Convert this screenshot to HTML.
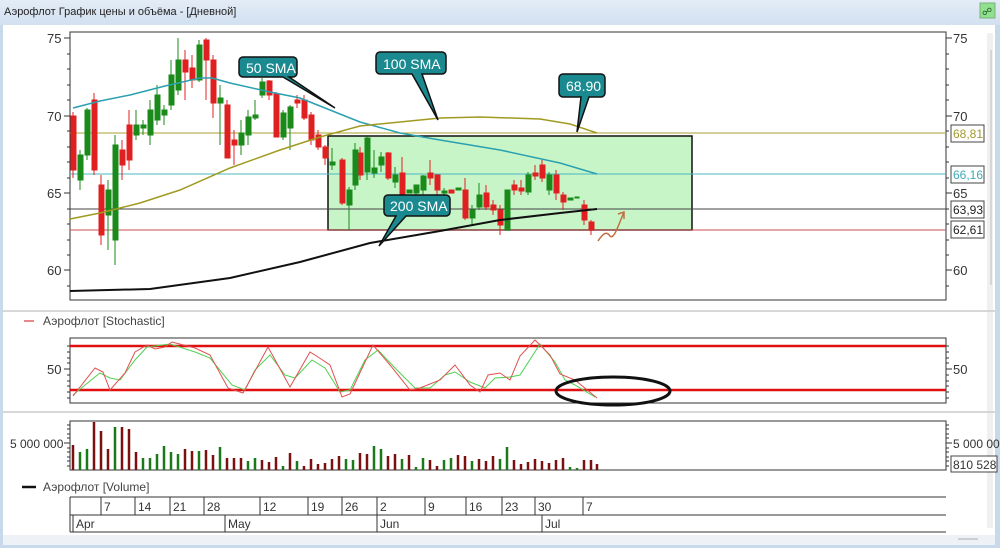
<!DOCTYPE html>
<html><head><meta charset="utf-8"><style>
html,body{margin:0;padding:0;width:1000px;height:548px;overflow:hidden;background:#c9d9ec;}
svg{display:block;font-family:"Liberation Sans","DejaVu Sans",sans-serif;}
</style></head><body>
<svg width="1000" height="548" viewBox="0 0 1000 548" xmlns="http://www.w3.org/2000/svg">
<defs><linearGradient id="tb" x1="0" y1="0" x2="0" y2="1"><stop offset="0" stop-color="#e4edf7"/><stop offset="1" stop-color="#d2e0f0"/></linearGradient></defs>
<rect x="0" y="0" width="1000" height="548" fill="#c9d9ec"/>
<rect x="0" y="0" width="1000" height="25" fill="url(#tb)"/>
<text x="4" y="15" font-size="11" fill="#222">Аэрофлот График цены и объёма - [Дневной]</text>
<rect x="980" y="3" width="15" height="15" fill="#8fe08f" stroke="#7ab07a"/>
<text x="982" y="15" font-size="10" fill="#225522">&#x260D;</text>
<rect x="3" y="25" width="992" height="510" fill="#fff"/>
<rect x="3" y="535" width="992" height="10" fill="#eef1f5"/>
<line x1="958" y1="539" x2="978" y2="539" stroke="#aaa"/>
<rect x="987" y="33" width="6" height="495" fill="#f0f0f0"/>
<line x1="991" y1="50" x2="991" y2="285" stroke="#bbb"/>
<!-- separators -->
<line x1="3" y1="311" x2="995" y2="311" stroke="#ccc" stroke-width="1.5"/>
<line x1="3" y1="412" x2="995" y2="412" stroke="#ccc" stroke-width="1.5"/>

<!-- MAIN PLOT -->
<rect x="70" y="32" width="876" height="268" fill="#fff" stroke="#333" stroke-width="1"/>
<g stroke="#333" font-size="13" fill="#333">
<line x1="64" y1="38" x2="70" y2="38"/><line x1="64" y1="116" x2="70" y2="116"/><line x1="64" y1="193" x2="70" y2="193"/><line x1="64" y1="270" x2="70" y2="270"/>
<line x1="946" y1="38" x2="952" y2="38"/><line x1="946" y1="116" x2="952" y2="116"/><line x1="946" y1="193" x2="952" y2="193"/><line x1="946" y1="270" x2="952" y2="270"/>
</g>
<g stroke="#333"><path d="M67 54h3M67 69h3M67 85h3M67 100h3M67 131h3M67 147h3M67 162h3M67 178h3M67 209h3M67 224h3M67 240h3M67 255h3M67 286h3M946 54h3M946 69h3M946 85h3M946 100h3M946 131h3M946 147h3M946 162h3M946 178h3M946 209h3M946 224h3M946 240h3M946 255h3M946 286h3"/></g>
<g font-size="13" fill="#333"><text x="47" y="43">75</text><text x="47" y="121">70</text><text x="47" y="198">65</text><text x="47" y="275">60</text>
<text x="953" y="43">75</text><text x="953" y="121">70</text><text x="953" y="198">65</text><text x="953" y="275">60</text></g>

<!-- green box -->
<rect x="328" y="136" width="364" height="94" fill="#c8f5c8" stroke="#111" stroke-width="1.5"/>
<!-- horizontal lines -->
<line x1="70" y1="133" x2="946" y2="133" stroke="#a8a030"/>
<line x1="70" y1="174" x2="946" y2="174" stroke="#4ab8c0"/>
<line x1="70" y1="209" x2="946" y2="209" stroke="#444"/>
<line x1="70" y1="230" x2="946" y2="230" stroke="#c85050"/>
<g font-size="12"><rect x="951" y="125" width="33" height="17" fill="#fff" stroke="#444"/><text x="953" y="138" fill="#a09a30">68,81</text>
<rect x="951" y="166" width="33" height="17" fill="#fff" stroke="#444"/><text x="953" y="179" fill="#40a8b8">66,16</text>
<rect x="951" y="201" width="33" height="17" fill="#fff" stroke="#444"/><text x="953" y="214" fill="#222">63,93</text>
<rect x="951" y="221" width="33" height="17" fill="#fff" stroke="#444"/><text x="953" y="234" fill="#222">62,61</text></g>

<!-- candles -->
<g stroke-width="1">
<g stroke="#e02020" fill="#e02020">
<line x1="73" y1="112" x2="73" y2="178"/><rect x="71" y="116" width="5" height="54"/>
<line x1="94" y1="93" x2="94" y2="175"/><rect x="92" y="100" width="5" height="70"/>
<line x1="101" y1="175" x2="101" y2="245"/><rect x="99" y="185" width="5" height="50"/>
<line x1="122" y1="140" x2="122" y2="180"/><rect x="120" y="150" width="5" height="15"/>
<line x1="129" y1="110" x2="129" y2="170"/><rect x="127" y="125" width="5" height="35"/>
<line x1="185" y1="50" x2="185" y2="100"/><rect x="183" y="60" width="5" height="12"/>
<line x1="192" y1="55" x2="192" y2="88"/><rect x="190" y="68" width="5" height="12"/>
<line x1="206" y1="38" x2="206" y2="100"/><rect x="204" y="40" width="5" height="20"/>
<line x1="213" y1="55" x2="213" y2="118"/><rect x="211" y="60" width="5" height="43"/>
<line x1="227" y1="100" x2="227" y2="158"/><rect x="225" y="105" width="5" height="53"/>
<line x1="234" y1="130" x2="234" y2="165"/><rect x="232" y="140" width="5" height="5"/>
<line x1="269" y1="80" x2="269" y2="100"/><rect x="267" y="81" width="5" height="14"/>
<line x1="276" y1="92" x2="276" y2="137"/><rect x="274" y="94" width="5" height="43"/>
<line x1="297" y1="95" x2="297" y2="108"/><rect x="295" y="100" width="5" height="3"/>
<line x1="304" y1="95" x2="304" y2="120"/><rect x="302" y="100" width="5" height="18"/>
<line x1="311" y1="112" x2="311" y2="145"/><rect x="309" y="115" width="5" height="25"/>
<line x1="318" y1="130" x2="318" y2="150"/><rect x="316" y="135" width="5" height="12"/>
<line x1="325" y1="145" x2="325" y2="165"/><rect x="323" y="147" width="5" height="11"/>
<line x1="342" y1="158" x2="342" y2="205"/><rect x="340" y="160" width="5" height="43"/>
<line x1="360" y1="147" x2="360" y2="180"/><rect x="358" y="153" width="5" height="22"/>
<line x1="388" y1="152" x2="388" y2="180"/><rect x="386" y="153" width="5" height="25"/>
<line x1="402" y1="157" x2="402" y2="196"/><rect x="400" y="173" width="5" height="22"/>
<line x1="430" y1="160" x2="430" y2="185"/><rect x="428" y="173" width="5" height="5"/>
<line x1="437" y1="175" x2="437" y2="197"/><rect x="435" y="175" width="5" height="15"/>
<rect x="449" y="190" width="5" height="3"/>
<line x1="465" y1="178" x2="465" y2="220"/><rect x="463" y="190" width="5" height="28"/>
<line x1="486" y1="185" x2="486" y2="210"/><rect x="484" y="193" width="5" height="14"/>
<line x1="493" y1="200" x2="493" y2="215"/><rect x="491" y="205" width="5" height="5"/>
<line x1="500" y1="205" x2="500" y2="235"/><rect x="498" y="210" width="5" height="15"/>
<line x1="514" y1="180" x2="514" y2="195"/><rect x="512" y="185" width="5" height="5"/>
<line x1="521" y1="180" x2="521" y2="195"/><rect x="519" y="188" width="5" height="3"/>
<line x1="535" y1="165" x2="535" y2="180"/><rect x="533" y="173" width="5" height="3"/>
<line x1="542" y1="160" x2="542" y2="182"/><rect x="540" y="165" width="5" height="13"/>
<line x1="556" y1="170" x2="556" y2="200"/><rect x="554" y="175" width="5" height="18"/>
<line x1="563" y1="192" x2="563" y2="210"/><rect x="561" y="195" width="5" height="7"/>
<line x1="584" y1="200" x2="584" y2="225"/><rect x="582" y="205" width="5" height="15"/>
<line x1="591" y1="220" x2="591" y2="235"/><rect x="589" y="222" width="5" height="8"/>
</g>
<g stroke="#1a8a1a" fill="#1a8a1a">
<line x1="80" y1="150" x2="80" y2="190"/><rect x="78" y="155" width="5" height="25"/>
<line x1="87" y1="108" x2="87" y2="160"/><rect x="85" y="110" width="5" height="45"/>
<line x1="108" y1="180" x2="108" y2="250"/><rect x="106" y="190" width="5" height="25"/>
<line x1="115" y1="135" x2="115" y2="265"/><rect x="113" y="145" width="5" height="95"/>
<line x1="136" y1="110" x2="136" y2="140"/><rect x="134" y="125" width="5" height="10"/>
<line x1="143" y1="120" x2="143" y2="135"/><rect x="141" y="125" width="5" height="3"/>
<line x1="150" y1="100" x2="150" y2="145"/><rect x="148" y="110" width="5" height="25"/>
<line x1="157" y1="85" x2="157" y2="125"/><rect x="155" y="95" width="5" height="25"/>
<line x1="164" y1="105" x2="164" y2="125"/><rect x="162" y="110" width="5" height="5"/>
<line x1="171" y1="60" x2="171" y2="110"/><rect x="169" y="75" width="5" height="30"/>
<line x1="178" y1="38" x2="178" y2="95"/><rect x="176" y="60" width="5" height="30"/>
<line x1="199" y1="40" x2="199" y2="82"/><rect x="197" y="45" width="5" height="35"/>
<line x1="220" y1="85" x2="220" y2="145"/><rect x="218" y="98" width="5" height="5"/>
<line x1="241" y1="120" x2="241" y2="155"/><rect x="239" y="133" width="5" height="12"/>
<line x1="248" y1="110" x2="248" y2="145"/><rect x="246" y="117" width="5" height="18"/>
<line x1="255" y1="100" x2="255" y2="120"/><rect x="253" y="115" width="5" height="3"/>
<line x1="262" y1="78" x2="262" y2="98"/><rect x="260" y="82" width="5" height="13"/>
<line x1="283" y1="110" x2="283" y2="140"/><rect x="281" y="113" width="5" height="24"/>
<line x1="290" y1="105" x2="290" y2="150"/><rect x="288" y="107" width="5" height="21"/>
<line x1="332" y1="148" x2="332" y2="170"/><rect x="330" y="162" width="5" height="3"/>
<line x1="349" y1="187" x2="349" y2="230"/><rect x="347" y="190" width="5" height="15"/>
<line x1="355" y1="143" x2="355" y2="190"/><rect x="353" y="150" width="5" height="35"/>
<line x1="367" y1="137" x2="367" y2="180"/><rect x="365" y="138" width="5" height="34"/>
<line x1="374" y1="150" x2="374" y2="178"/><rect x="372" y="168" width="5" height="5"/>
<line x1="381" y1="152" x2="381" y2="172"/><rect x="379" y="157" width="5" height="8"/>
<line x1="395" y1="167" x2="395" y2="188"/><rect x="393" y="175" width="5" height="7"/>
<rect x="407" y="190" width="5" height="3"/>
<line x1="416" y1="185" x2="416" y2="195"/><rect x="414" y="185" width="5" height="8"/>
<line x1="423" y1="175" x2="423" y2="195"/><rect x="421" y="176" width="5" height="14"/>
<line x1="444" y1="188" x2="444" y2="196"/><rect x="442" y="191" width="5" height="2"/>
<rect x="456" y="188" width="5" height="2"/>
<line x1="472" y1="205" x2="472" y2="225"/><rect x="470" y="210" width="5" height="8"/>
<line x1="479" y1="183" x2="479" y2="210"/><rect x="477" y="195" width="5" height="12"/>
<rect x="505" y="190" width="5" height="40"/>
<line x1="528" y1="172" x2="528" y2="195"/><rect x="526" y="175" width="5" height="17"/>
<line x1="549" y1="172" x2="549" y2="195"/><rect x="547" y="175" width="5" height="15"/>
<rect x="568" y="198" width="5" height="2"/>
<rect x="575" y="197" width="4" height="1"/>
</g></g>

<!-- SMAs -->
<polyline fill="none" stroke="#2aa0b0" stroke-width="1.5" points="73,108 100,101 130,95 165,86 200,78 212,78 230,83 270,92 300,98 330,110 360,122 400,133 440,140 500,150 560,163 597,174"/>
<polyline fill="none" stroke="#a09a20" stroke-width="1.5" points="70,219 100,213 140,203 180,190 230,168 280,150 320,137 360,126 400,122 440,118 480,117 540,119 570,124 597,133"/>
<polyline fill="none" stroke="#111" stroke-width="2" points="70,291 150,289 230,278 300,262 370,243 440,231 500,220 560,213 597,209"/>
<path d="M598 241 C602 235 606 230 610 236 C614 240 618 226 624 212 M618 214 L624 212 L624 219" fill="none" stroke="#c07040" stroke-width="1.5"/>

<!-- callouts -->
<g stroke="#111" stroke-width="1.5" fill="#1a8a90">
<path d="M243 57 h50 a4 4 0 0 1 4 4 v12 a4 4 0 0 1 -4 4 h-4 l46 31 l-52 -31 h-40 a4 4 0 0 1 -4 -4 v-12 a4 4 0 0 1 4 -4z"/>
<path d="M380 52 h62 a4 4 0 0 1 4 4 v14 a4 4 0 0 1 -4 4 h-20 l16 46 l-26 -46 h-32 a4 4 0 0 1 -4 -4 v-14 a4 4 0 0 1 4 -4z"/>
<path d="M563 74 h38 a4 4 0 0 1 4 4 v15 a4 4 0 0 1 -4 4 h-12 l-12 35 l4 -35 h-18 a4 4 0 0 1 -4 -4 v-15 a4 4 0 0 1 4 -4z"/>
<path d="M388 195 h58 a4 4 0 0 1 4 4 v13 a4 4 0 0 1 -4 4 h-40 l-27 30 l17 -30 h-8 a4 4 0 0 1 -4 -4 v-13 a4 4 0 0 1 4 -4z"/>
</g>
<g fill="#fff" font-size="14"><text x="246" y="73">50 SMA</text><text x="383" y="69">100 SMA</text><text x="566" y="91">68.90</text><text x="390" y="211">200 SMA</text></g>

<!-- STOCHASTIC -->
<line x1="24" y1="321" x2="34" y2="321" stroke="#e06060" stroke-width="1.5"/>
<text x="43" y="325" font-size="12" fill="#444">Аэрофлот [Stochastic]</text>
<rect x="70" y="338" width="876" height="65" fill="#fff" stroke="#333"/>
<line x1="70" y1="346" x2="946" y2="346" stroke="#e01010" stroke-width="2.5"/>
<line x1="70" y1="390" x2="946" y2="390" stroke="#e01010" stroke-width="2.5"/>
<g stroke="#333"><path d="M64 369h6M67 346h3M67 352h3M67 358h3M67 363h3M67 375h3M67 381h3M67 386h3M67 392h3M67 398h3M946 369h6M946 346h3M946 352h3M946 358h3M946 363h3M946 375h3M946 381h3M946 386h3M946 392h3M946 398h3"/></g>
<text x="47" y="374" font-size="13" fill="#333">50</text><text x="953" y="374" font-size="13" fill="#333">50</text>
<polyline fill="none" stroke="#50d050" stroke-width="1" points="73,395 85,385 100,373 110,378 120,380 135,360 147,347 170,344 195,352 210,358 232,385 245,390 255,370 270,355 285,375 295,378 312,360 325,368 340,392 350,390 365,360 378,350 395,368 415,388 430,388 445,375 455,372 470,382 485,388 495,378 510,377 520,375 540,344 555,362 565,380 575,385 595,397"/>
<polyline fill="none" stroke="#e05050" stroke-width="1" points="73,396 95,368 103,372 110,390 125,373 135,352 147,345 155,349 165,347 172,342 195,348 210,355 228,388 243,393 268,347 290,387 310,352 318,357 330,365 342,397 350,394 373,345 390,365 410,390 420,388 440,380 455,365 470,385 480,392 488,375 500,373 510,380 520,356 535,340 550,355 560,374 575,380 597,398"/>
<ellipse cx="613" cy="391" rx="57" ry="14" fill="none" stroke="#111" stroke-width="3"/>

<!-- VOLUME -->
<rect x="70" y="421" width="876" height="49" fill="#fff" stroke="#333"/>
<g stroke="#333"><path d="M64 443h6M67 425h3M67 429h3M67 434h3M67 438h3M67 448h3M67 452h3M67 457h3M67 461h3M67 466h3M946 443h6M946 425h3M946 429h3M946 434h3M946 438h3M946 448h3M946 452h3M946 457h3M946 461h3M946 466h3"/></g>
<text x="10" y="448" font-size="12" fill="#333">5 000 000</text>
<text x="953" y="448" font-size="12" fill="#333">5 000 000</text>
<rect x="951" y="456" width="46" height="16" fill="#fff" stroke="#444"/><text x="953" y="469" font-size="12" fill="#333">810 528</text>
<g stroke-width="2.5">
<g stroke="#7a1010"><path d="M73 470V445M94 470V422M101 470V431M108 470V449M122 470V427M129 470V429M136 470V452M185 470V449M192 470V451M206 470V450M213 470V455M227 470V458M234 470V458M241 470V458M262 470V460M269 470V462M276 470V457M290 470V453M304 470V466M311 470V459M318 470V464M325 470V463M332 470V459M339 470V456M360 470V453M367 470V454M388 470V456M395 470V454M409 470V455M430 470V460M437 470V466M458 470V455M465 470V456M479 470V459M486 470V461M493 470V456M514 470V460M521 470V464M528 470V462M535 470V459M542 470V461M549 470V463M556 470V460M563 470V458M584 470V460M591 470V460M597 470V464"/></g>
<g stroke="#1a7a1a"><path d="M80 470V452M87 470V449M115 470V427M143 470V458M150 470V458M157 470V454M164 470V446M171 470V452M178 470V454M199 470V451M220 470V447M248 470V461M255 470V458M283 470V466M297 470V461M346 470V459M353 470V460M374 470V446M381 470V449M402 470V459M416 470V467M423 470V458M444 470V460M451 470V458M472 470V461M500 470V459M507 470V447M570 470V467M577 470V468"/></g>
</g>

<!-- Volume legend + date axis -->
<line x1="22" y1="487" x2="36" y2="487" stroke="#111" stroke-width="2.5"/>
<text x="43" y="491" font-size="12" fill="#444">Аэрофлот [Volume]</text>
<g stroke="#333" fill="none">
<path d="M70 497H946M70 515H946M70 532H946M70 497V532M73 515V532"/>
<path d="M101 497V515M135 497V515M170 497V515M204 497V515M260 497V515M308 497V515M342 497V515M377 497V515M425 497V515M466 497V515M502 497V515M535 497V515M583 497V515M225 515V532M377 515V532M542 515V532"/>
</g>
<g font-size="12" fill="#333">
<text x="104" y="511">7</text><text x="138" y="511">14</text><text x="173" y="511">21</text><text x="207" y="511">28</text><text x="263" y="511">12</text><text x="311" y="511">19</text><text x="345" y="511">26</text><text x="380" y="511">2</text><text x="428" y="511">9</text><text x="469" y="511">16</text><text x="505" y="511">23</text><text x="538" y="511">30</text><text x="586" y="511">7</text>
<text x="76" y="528">Apr</text><text x="228" y="528">May</text><text x="380" y="528">Jun</text><text x="545" y="528">Jul</text>
</g>
</svg>
</body></html>
